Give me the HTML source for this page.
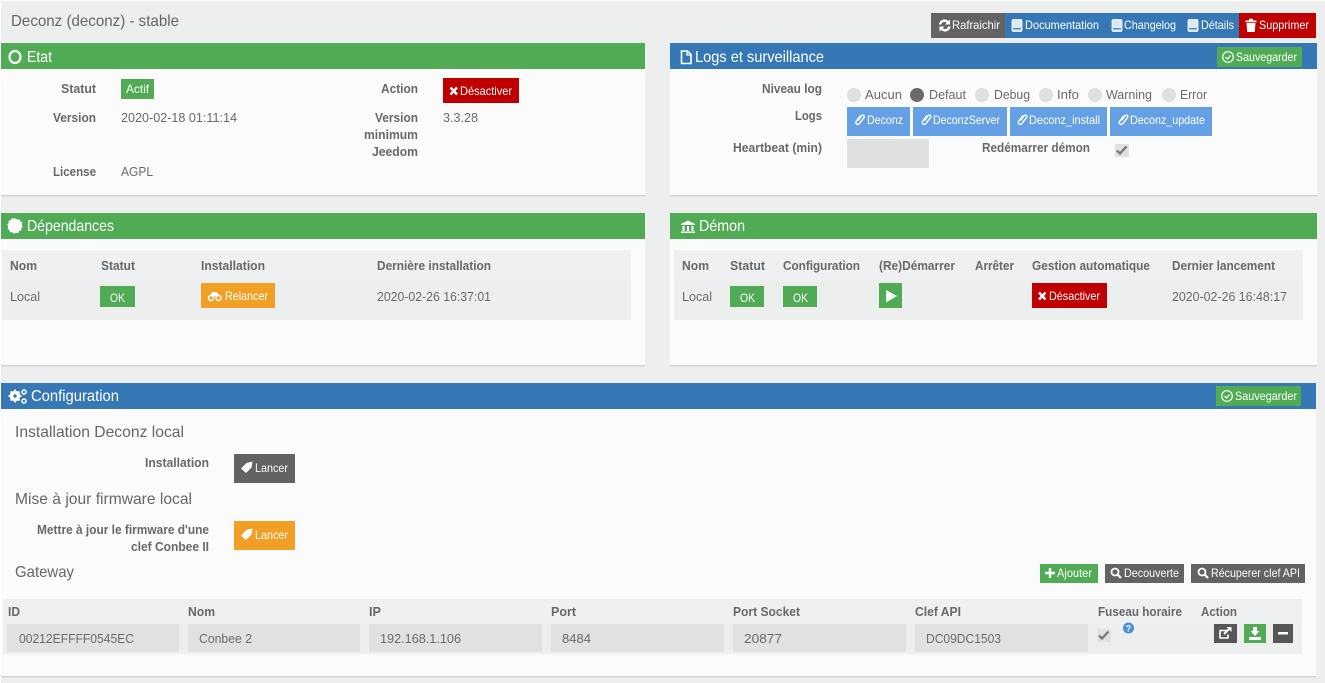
<!DOCTYPE html>
<html lang="fr"><head><meta charset="utf-8"><title>Deconz</title>
<style>
html,body{margin:0;padding:0;background:#edeeee;overflow:hidden}
svg{display:block}
text{font-family:"Liberation Sans",sans-serif;font-size:13px;fill:#6a6a6a}
.b{font-weight:bold;fill:#686868}
.w{fill:#fff;font-size:12px}
.h{fill:#fff;font-size:16px}
.s{font-size:16px;fill:#666}
.p{fill:#fbfbfb}
</style></head><body>
<svg width="1325" height="683" viewBox="0 0 1325 683" xmlns="http://www.w3.org/2000/svg">
<rect width="1325" height="683" fill="#edeeee"/>
<rect width="1325" height="1" fill="#fff"/>
<rect width="1" height="683" fill="#fff"/>

<!-- panels -->
<g fill="#d0d0d0"><rect x="1" y="195" width="644" height="1"/><rect x="670" y="195" width="647" height="1"/><rect x="1" y="365" width="644" height="1"/><rect x="670" y="365" width="647" height="1"/><rect x="1" y="676" width="1315" height="1"/></g>
<g fill="#e2e2e2"><rect x="1" y="196" width="644" height="1"/><rect x="670" y="196" width="647" height="1"/><rect x="1" y="366" width="644" height="1"/><rect x="670" y="366" width="647" height="1"/><rect x="1" y="677" width="1315" height="1"/></g>
<rect class="p" x="1" y="69" width="644" height="126"/>
<rect class="p" x="670" y="69" width="647" height="126"/>
<rect class="p" x="1" y="239" width="644" height="126"/>
<rect class="p" x="670" y="239" width="647" height="126"/>
<rect class="p" x="1" y="409" width="1315" height="267"/>
<rect x="1" y="43" width="644" height="26" fill="#50ab54"/>
<rect x="670" y="43" width="647" height="26" fill="#3578b5"/>
<rect x="1" y="213" width="644" height="26" fill="#50ab54"/>
<rect x="670" y="213" width="647" height="26" fill="#50ab54"/>
<rect x="1" y="383" width="1315" height="26" fill="#3578b5"/>

<!-- top -->
<text x="11" y="26" textLength="168" lengthAdjust="spacingAndGlyphs" style="font-size:16px;fill:#666">Deconz (deconz) - stable</text>
<rect x="931" y="13" width="74" height="25" fill="#636363"/>
<rect x="1005" y="13" width="234" height="25" fill="#3578b5"/>
<rect x="1239" y="13" width="77" height="25" fill="#c00000"/>
<path d="M939 24.500a5.500 5.500 0 0 1 9.300-3.500l1.700-1.500v5h-5l1.700-1.800a3.200 3.200 0 0 0-5.300 1.800zM950.500 26.500a5.500 5.500 0 0 1-9.300 3.500l-1.700 1.500v-5h5l-1.700 1.800a3.200 3.200 0 0 0 5.300-1.800z" fill="#fff"/>
<text class="w" x="952" y="29" textLength="48" lengthAdjust="spacingAndGlyphs">Rafraichir</text>
<rect x="1012" y="19.500" width="10" height="12" rx="1.500" fill="#dce9f5" stroke="#fff" stroke-width=".8"/><rect x="1013" y="28.200" width="8" height="1.200" fill="#3578b5"/>
<text class="w" x="1025" y="29" textLength="74" lengthAdjust="spacingAndGlyphs">Documentation</text>
<rect x="1112" y="19.500" width="10" height="12" rx="1.500" fill="#dce9f5" stroke="#fff" stroke-width=".8"/><rect x="1113" y="28.200" width="8" height="1.200" fill="#3578b5"/>
<text class="w" x="1124" y="29" textLength="52" lengthAdjust="spacingAndGlyphs">Changelog</text>
<rect x="1188" y="19.500" width="10" height="12" rx="1.500" fill="#dce9f5" stroke="#fff" stroke-width=".8"/><rect x="1189" y="28.200" width="8" height="1.200" fill="#3578b5"/>
<text class="w" x="1201" y="29" textLength="33" lengthAdjust="spacingAndGlyphs">Détails</text>
<path d="M1245.500 20.500h11v1.700h-11zM1249 18.800h4v1.700h-4zM1246.500 23h9l-.7 9h-7.600z" fill="#fff"/>
<text class="w" x="1259" y="29" textLength="50" lengthAdjust="spacingAndGlyphs">Supprimer</text>

<!-- Etat -->
<ellipse cx="15" cy="57" rx="5.500" ry="6" fill="none" stroke="#fff" stroke-width="2.200"/>
<text class="h" x="27" y="62" textLength="25" lengthAdjust="spacingAndGlyphs">Etat</text>
<text class="b" x="61" y="93" textLength="35" lengthAdjust="spacingAndGlyphs">Statut</text>
<rect x="121" y="79" width="33" height="20" fill="#50ab54"/>
<text class="w" x="126" y="93" textLength="23" lengthAdjust="spacingAndGlyphs">Actif</text>
<text class="b" x="381" y="93" textLength="37" lengthAdjust="spacingAndGlyphs">Action</text>
<rect x="443" y="78" width="76" height="25" fill="#c00000"/>
<path d="M450.500 87.500l6.500 7M457 87.500l-6.500 7" stroke="#fff" stroke-width="2.400"/>
<text class="w" x="460" y="95" textLength="52" lengthAdjust="spacingAndGlyphs">Désactiver</text>
<text class="b" x="53" y="122" textLength="43" lengthAdjust="spacingAndGlyphs">Version</text>
<text x="121" y="122" textLength="116" lengthAdjust="spacingAndGlyphs">2020-02-18 01:11:14</text>
<text class="b" x="375" y="122" textLength="43" lengthAdjust="spacingAndGlyphs">Version</text>
<text class="b" x="364" y="139" textLength="54" lengthAdjust="spacingAndGlyphs">minimum</text>
<text class="b" x="372" y="156" textLength="46" lengthAdjust="spacingAndGlyphs">Jeedom</text>
<text x="443" y="122" textLength="35" lengthAdjust="spacingAndGlyphs">3.3.28</text>
<text class="b" x="53" y="176" textLength="43" lengthAdjust="spacingAndGlyphs">License</text>
<text x="121" y="176" textLength="32" lengthAdjust="spacingAndGlyphs">AGPL</text>

<!-- Logs -->
<path d="M681.500 51h6l3.500 3.500v9h-9.500z" fill="none" stroke="#fff" stroke-width="1.600"/><path d="M687 50.500v4.500h4.500" fill="none" stroke="#fff" stroke-width="1.300"/>
<text class="h" x="695" y="62" textLength="129" lengthAdjust="spacingAndGlyphs">Logs et surveillance</text>
<rect x="1217" y="47" width="85" height="20" fill="#50ab54"/>
<circle cx="1228" cy="57" r="5.300" fill="none" stroke="#fff" stroke-width="1.200"/><path d="M1225.500 57l2 2 3-3.500" fill="none" stroke="#fff" stroke-width="1.200"/>
<text class="w" x="1236" y="61" textLength="61" lengthAdjust="spacingAndGlyphs">Sauvegarder</text>
<text class="b" x="762" y="93" textLength="60" lengthAdjust="spacingAndGlyphs">Niveau log</text>
<circle cx="854" cy="95" r="7" fill="#dfe0e0"/><text x="865" y="99" textLength="37" lengthAdjust="spacingAndGlyphs">Aucun</text>
<circle cx="917" cy="95" r="7" fill="#6a6a6a"/><text x="929" y="99" textLength="37" lengthAdjust="spacingAndGlyphs">Defaut</text>
<circle cx="982" cy="95" r="7" fill="#dfe0e0"/><text x="994" y="99" textLength="36" lengthAdjust="spacingAndGlyphs">Debug</text>
<circle cx="1046" cy="95" r="7" fill="#dfe0e0"/><text x="1057" y="99" textLength="22" lengthAdjust="spacingAndGlyphs">Info</text>
<circle cx="1095" cy="95" r="7" fill="#dfe0e0"/><text x="1106" y="99" textLength="46" lengthAdjust="spacingAndGlyphs">Warning</text>
<circle cx="1169" cy="95" r="7" fill="#dfe0e0"/><text x="1180" y="99" textLength="27" lengthAdjust="spacingAndGlyphs">Error</text>
<text class="b" x="795" y="120" textLength="27" lengthAdjust="spacingAndGlyphs">Logs</text>
<g fill="#659fe4"><rect x="847" y="107" width="63" height="29"/><rect x="913" y="107" width="94" height="29"/><rect x="1010" y="107" width="97" height="29"/><rect x="1110" y="107" width="102" height="29"/></g>
<g fill="none" stroke="#fff" stroke-width="1.400">
<path d="M860.500 115.500l-4.500 6a2 2 0 0 0 3.200 2.300l5-6.500a1.500 1.500 0 0 0-2.300-1.800l-3.900 5"/>
<path d="M927 115.500l-4.500 6a2 2 0 0 0 3.200 2.300l5-6.500a1.500 1.500 0 0 0-2.300-1.800l-3.900 5"/>
<path d="M1023 115.500l-4.500 6a2 2 0 0 0 3.200 2.300l5-6.500a1.500 1.500 0 0 0-2.300-1.800l-3.900 5"/>
<path d="M1124 115.500l-4.500 6a2 2 0 0 0 3.200 2.300l5-6.500a1.500 1.500 0 0 0-2.300-1.800l-3.900 5"/>
</g>
<text class="w" x="867" y="124" textLength="36" lengthAdjust="spacingAndGlyphs">Deconz</text>
<text class="w" x="933" y="124" textLength="67" lengthAdjust="spacingAndGlyphs">DeconzServer</text>
<text class="w" x="1029" y="124" textLength="71" lengthAdjust="spacingAndGlyphs">Deconz_install</text>
<text class="w" x="1130" y="124" textLength="75" lengthAdjust="spacingAndGlyphs">Deconz_update</text>
<text class="b" x="733" y="152" textLength="89" lengthAdjust="spacingAndGlyphs">Heartbeat (min)</text>
<rect x="847" y="139" width="82" height="29" fill="#dfe0e0"/>
<text class="b" x="982" y="152" textLength="108" lengthAdjust="spacingAndGlyphs">Redémarrer démon</text>
<rect x="1115" y="144" width="14" height="13" fill="#dfe0e0"/>
<path d="M1117 150.500l3 3 6.500-7" fill="none" stroke="#777" stroke-width="2.200"/>

<!-- Dependances -->
<path d="M15.500 218.500l1.900 1.200 2.200-.4.700 2 2 1.100-.4 2.200.8 2-1.400 1.600v2.200l-2.100.7-1.100 1.900-2.200-.3-2 1-1.600-1.400-2.200-.1-.7-2.100-1.700-1.300.4-2.200-.8-2 1.400-1.600v-2.200l2.100-.7 1.100-1.900 2.200.3z" fill="#fff"/>
<text class="h" x="27" y="231" textLength="87" lengthAdjust="spacingAndGlyphs">Dépendances</text>
<rect x="2" y="250" width="629" height="31" fill="#eff0f2"/>
<rect x="2" y="281" width="629" height="39" fill="#edeeee"/>
<text class="b" x="10" y="270" textLength="27" lengthAdjust="spacingAndGlyphs">Nom</text>
<text class="b" x="101" y="270" textLength="34" lengthAdjust="spacingAndGlyphs">Statut</text>
<text class="b" x="201" y="270" textLength="64" lengthAdjust="spacingAndGlyphs">Installation</text>
<text class="b" x="377" y="270" textLength="114" lengthAdjust="spacingAndGlyphs">Dernière installation</text>
<text x="10" y="301" textLength="30" lengthAdjust="spacingAndGlyphs">Local</text>
<rect x="100" y="286" width="35" height="21" fill="#50ab54"/>
<text class="w" x="110" y="302" textLength="15" lengthAdjust="spacingAndGlyphs">OK</text>
<rect x="201" y="283" width="74" height="25" fill="#f29f26"/>
<circle cx="211" cy="298" r="2.500" fill="none" stroke="#fff" stroke-width="1.500"/><circle cx="218.500" cy="298" r="2.500" fill="none" stroke="#fff" stroke-width="1.500"/><path d="M210 295l2.500-3h4l3 3.500-5 1z" fill="#fff"/>
<text class="w" x="225" y="300" textLength="43" lengthAdjust="spacingAndGlyphs">Relancer</text>
<text x="377" y="301" textLength="114" lengthAdjust="spacingAndGlyphs">2020-02-26 16:37:01</text>

<!-- Demon -->
<path d="M681 224l7-3.500 7 3.500v1h-14zM682.500 226h2v5h-2zM687 226h2v5h-2zM691.500 226h2v5h-2zM681 231.500h14v1.500h-14z" fill="#fff"/>
<text class="h" x="699" y="231" textLength="46" lengthAdjust="spacingAndGlyphs">Démon</text>
<rect x="674" y="250" width="629" height="31" fill="#eff0f2"/>
<rect x="674" y="281" width="629" height="39" fill="#edeeee"/>
<text class="b" x="682" y="270" textLength="27" lengthAdjust="spacingAndGlyphs">Nom</text>
<text class="b" x="730" y="270" textLength="35" lengthAdjust="spacingAndGlyphs">Statut</text>
<text class="b" x="783" y="270" textLength="77" lengthAdjust="spacingAndGlyphs">Configuration</text>
<text class="b" x="879" y="270" textLength="76" lengthAdjust="spacingAndGlyphs">(Re)Démarrer</text>
<text class="b" x="975" y="270" textLength="39" lengthAdjust="spacingAndGlyphs">Arrêter</text>
<text class="b" x="1032" y="270" textLength="118" lengthAdjust="spacingAndGlyphs">Gestion automatique</text>
<text class="b" x="1172" y="270" textLength="103" lengthAdjust="spacingAndGlyphs">Dernier lancement</text>
<text x="682" y="301" textLength="30" lengthAdjust="spacingAndGlyphs">Local</text>
<rect x="730" y="286" width="34" height="21" fill="#50ab54"/>
<text class="w" x="740" y="302" textLength="15" lengthAdjust="spacingAndGlyphs">OK</text>
<rect x="783" y="286" width="34" height="21" fill="#50ab54"/>
<text class="w" x="793" y="302" textLength="15" lengthAdjust="spacingAndGlyphs">OK</text>
<rect x="879" y="283" width="23" height="25" fill="#50ab54"/>
<path d="M886 290l11 6-11 6.500z" fill="#f2f8f2"/>
<rect x="1032" y="283" width="75" height="25" fill="#c00000"/>
<path d="M1039 292.500l6.500 7M1045.500 292.500l-6.500 7" stroke="#fff" stroke-width="2.400"/>
<text class="w" x="1049" y="300" textLength="51" lengthAdjust="spacingAndGlyphs">Désactiver</text>
<text x="1172" y="301" textLength="115" lengthAdjust="spacingAndGlyphs">2020-02-26 16:48:17</text>

<!-- Config -->
<circle cx="15" cy="396" r="3.800" fill="none" stroke="#fff" stroke-width="3"/>
<path d="M15 389.500v13M8.500 396h13M10.500 391.500l9 9M19.500 391.500l-9 9" stroke="#fff" stroke-width="1.800"/>
<circle cx="15" cy="396" r="1.700" fill="#3578b5"/>
<circle cx="24" cy="392" r="2" fill="none" stroke="#fff" stroke-width="1.500"/><circle cx="24" cy="401" r="2" fill="none" stroke="#fff" stroke-width="1.500"/>
<text class="h" x="31" y="401" textLength="88" lengthAdjust="spacingAndGlyphs">Configuration</text>
<rect x="1216" y="386" width="85" height="20" fill="#50ab54"/>
<circle cx="1227" cy="396" r="5.300" fill="none" stroke="#fff" stroke-width="1.200"/><path d="M1224.500 396l2 2 3-3.500" fill="none" stroke="#fff" stroke-width="1.200"/>
<text class="w" x="1235" y="400" textLength="62" lengthAdjust="spacingAndGlyphs">Sauvegarder</text>

<text class="s" x="15" y="437" textLength="169" lengthAdjust="spacingAndGlyphs">Installation Deconz local</text>
<text class="b" x="145" y="467" textLength="64" lengthAdjust="spacingAndGlyphs">Installation</text>
<rect x="234" y="454" width="61" height="29" fill="#636363"/>
<path d="M241 468.500l5.500-5.500 6-1.500-1 6-5.500 5.500z" fill="#fff"/>
<text class="w" x="255" y="472" textLength="33" lengthAdjust="spacingAndGlyphs">Lancer</text>
<text class="s" x="15" y="504" textLength="177" lengthAdjust="spacingAndGlyphs">Mise à jour firmware local</text>
<text class="b" x="37" y="534" textLength="172" lengthAdjust="spacingAndGlyphs">Mettre à jour le firmware d'une</text>
<text class="b" x="131" y="551" textLength="78" lengthAdjust="spacingAndGlyphs">clef Conbee II</text>
<rect x="234" y="521" width="61" height="29" fill="#f29f26"/>
<path d="M241 535.500l5.500-5.500 6-1.500-1 6-5.500 5.500z" fill="#fff"/>
<text class="w" x="255" y="539" textLength="33" lengthAdjust="spacingAndGlyphs">Lancer</text>
<text class="s" x="15" y="577" textLength="59" lengthAdjust="spacingAndGlyphs">Gateway</text>

<rect x="1040" y="564" width="58" height="19" fill="#50ab54"/>
<path d="M1050 568v10M1045 573h10" stroke="#fff" stroke-width="2.400"/>
<text class="w" x="1057" y="577" textLength="35" lengthAdjust="spacingAndGlyphs">Ajouter</text>
<rect x="1105" y="564" width="79" height="19" fill="#636363"/>
<circle cx="1115" cy="572" r="3.500" fill="none" stroke="#fff" stroke-width="1.800"/><path d="M1117.500 574.500l3.500 3.500" stroke="#fff" stroke-width="2.200"/>
<text class="w" x="1124" y="577" textLength="55" lengthAdjust="spacingAndGlyphs">Decouverte</text>
<rect x="1191" y="564" width="114" height="19" fill="#636363"/>
<circle cx="1202" cy="572" r="3.500" fill="none" stroke="#fff" stroke-width="1.800"/><path d="M1204.500 574.500l3.500 3.500" stroke="#fff" stroke-width="2.200"/>
<text class="w" x="1211" y="577" textLength="89" lengthAdjust="spacingAndGlyphs">Récuperer clef API</text>

<rect x="3" y="599" width="1299" height="25" fill="#eff0f2"/>
<rect x="3" y="624" width="1299" height="30" fill="#edeeee"/>
<text class="b" x="8" y="616" textLength="12" lengthAdjust="spacingAndGlyphs">ID</text>
<text class="b" x="188" y="616" textLength="27" lengthAdjust="spacingAndGlyphs">Nom</text>
<text class="b" x="369" y="616" textLength="12" lengthAdjust="spacingAndGlyphs">IP</text>
<text class="b" x="551" y="616" textLength="25" lengthAdjust="spacingAndGlyphs">Port</text>
<text class="b" x="733" y="616" textLength="67" lengthAdjust="spacingAndGlyphs">Port Socket</text>
<text class="b" x="915" y="616" textLength="46" lengthAdjust="spacingAndGlyphs">Clef API</text>
<text class="b" x="1098" y="616" textLength="84" lengthAdjust="spacingAndGlyphs">Fuseau horaire</text>
<text class="b" x="1201" y="616" textLength="36" lengthAdjust="spacingAndGlyphs">Action</text>
<g fill="#e0e1e1"><rect x="7" y="624" width="172" height="28"/><rect x="188" y="624" width="172" height="28"/><rect x="369" y="624" width="173" height="28"/><rect x="551" y="624" width="173" height="28"/><rect x="733" y="624" width="173" height="28"/><rect x="915" y="624" width="173" height="28"/></g>
<text x="19" y="643" textLength="115" lengthAdjust="spacingAndGlyphs">00212EFFFF0545EC</text>
<text x="199" y="643" textLength="53" lengthAdjust="spacingAndGlyphs">Conbee 2</text>
<text x="380" y="643" textLength="81" lengthAdjust="spacingAndGlyphs">192.168.1.106</text>
<text x="562" y="643" textLength="29" lengthAdjust="spacingAndGlyphs">8484</text>
<text x="744" y="643" textLength="38" lengthAdjust="spacingAndGlyphs">20877</text>
<text x="926" y="643" textLength="75" lengthAdjust="spacingAndGlyphs">DC09DC1503</text>
<rect x="1097" y="629" width="14" height="13" fill="#dfe0e0"/>
<path d="M1099 635.500l3 3 6.500-7" fill="none" stroke="#777" stroke-width="2.200"/>
<circle cx="1128.500" cy="628" r="5.500" fill="#4a8fd6"/>
<text x="1128.500" y="631.500" text-anchor="middle" style="font-size:9px;font-weight:bold;fill:#fff">?</text>
<rect x="1214" y="624" width="23" height="19" fill="#565656"/>
<path d="M1226.500 630.500h-6.500v7.500h8v-3.500" fill="none" stroke="#fff" stroke-width="1.600"/><path d="M1224 634l6-6" fill="none" stroke="#fff" stroke-width="2"/><path d="M1226.500 627h5v5z" fill="#fff"/>
<rect x="1244" y="624" width="22" height="19" fill="#50ab54"/>
<path d="M1253 627h4v4h2.500l-4.500 5-4.500-5h2.500zM1249 637h12v3h-12z" fill="#fff"/>
<rect x="1273" y="624" width="20" height="19" fill="#565656"/>
<rect x="1278" y="632" width="10" height="2.500" fill="#fff"/>
</svg>
</body></html>
